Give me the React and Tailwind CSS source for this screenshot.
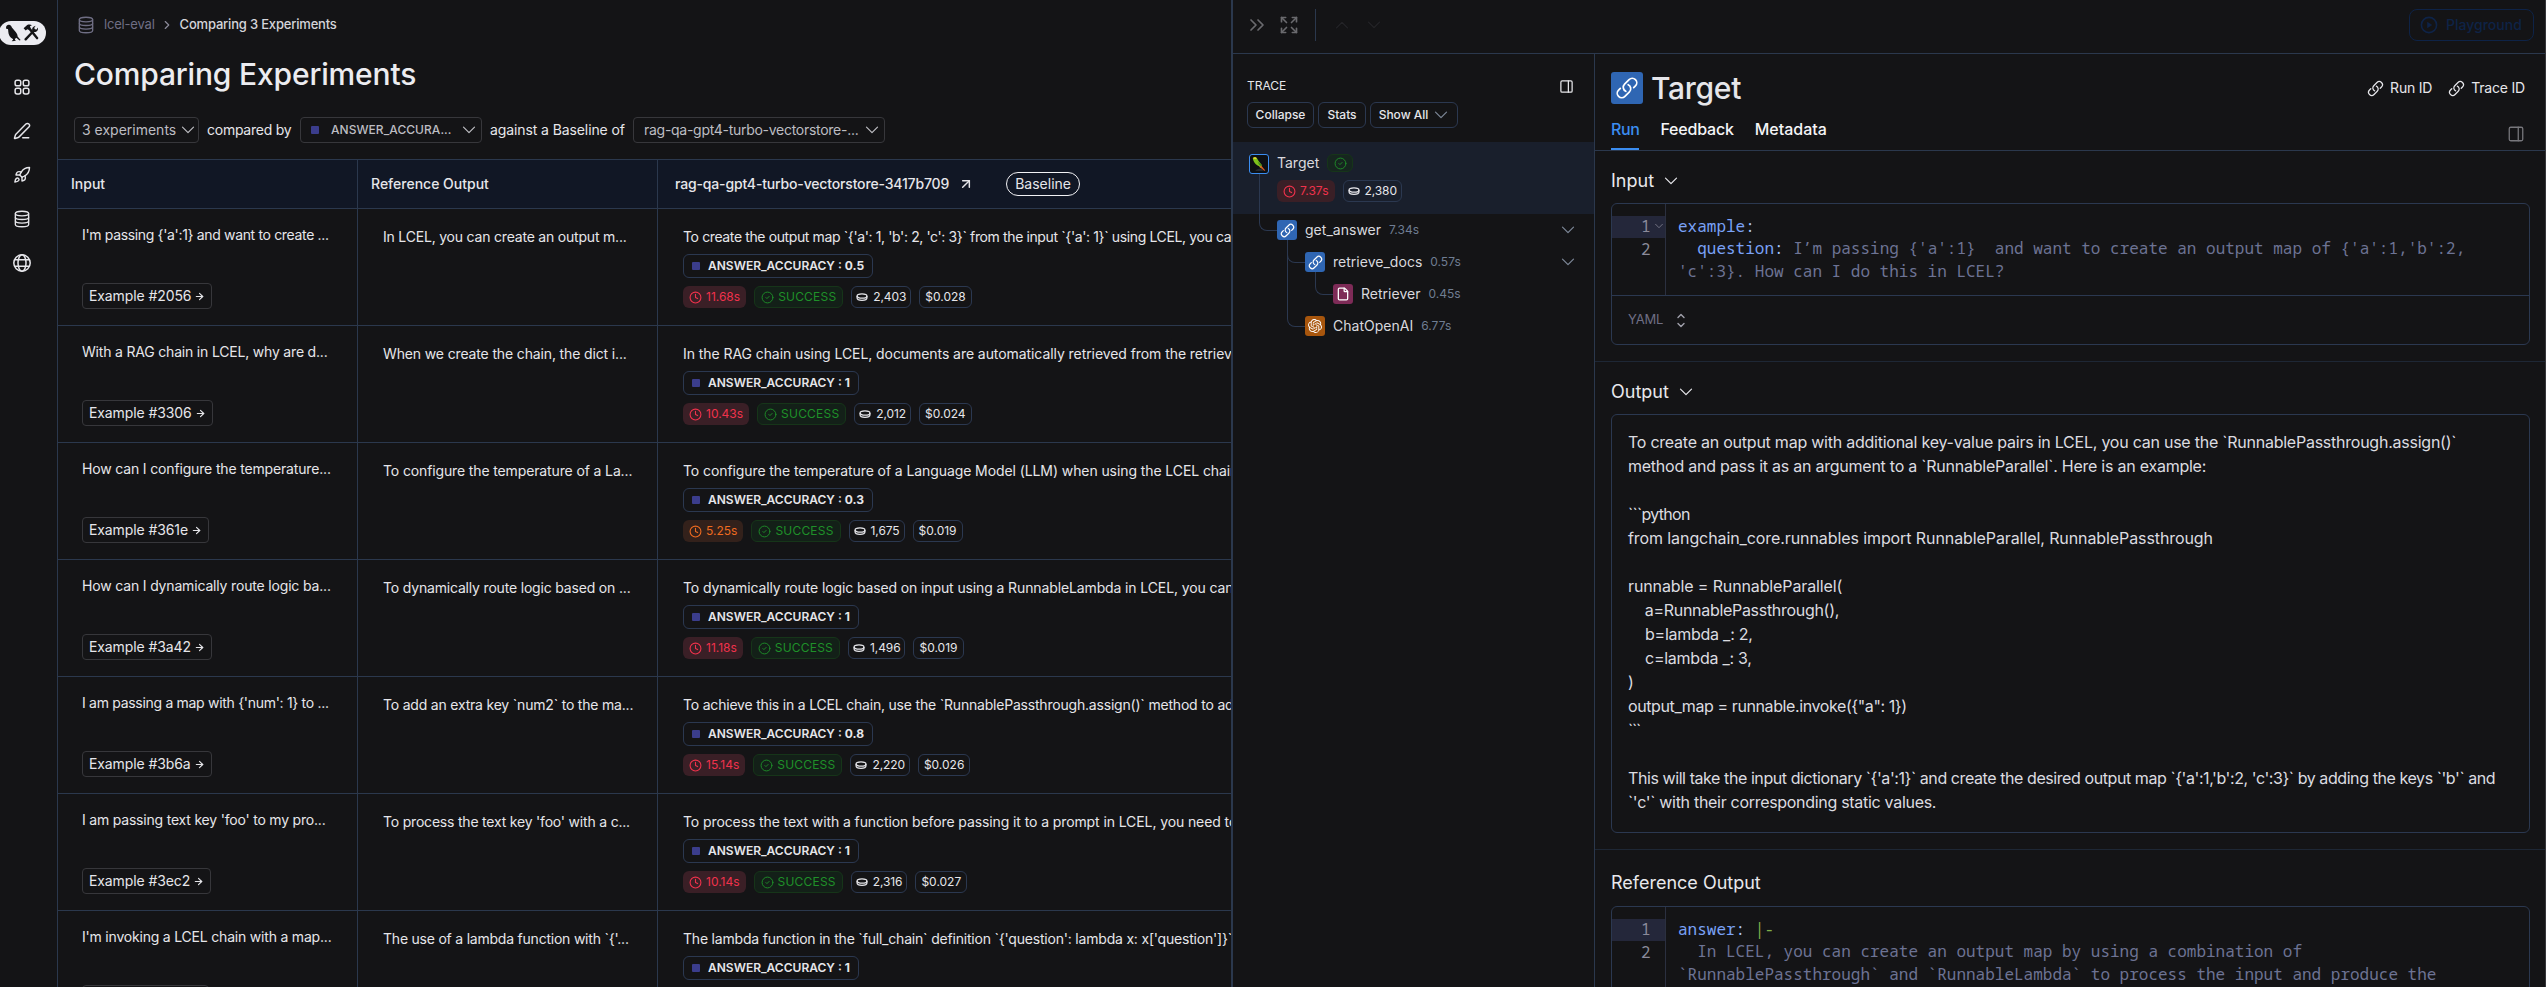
import React from "react";
import {
  ArrowRight, ArrowUpRight, ChevronRight, ChevronsRight,
  CircleCheck, Clock, Expand, File, PanelRight, PenLine, Rocket,
} from "lucide-react";
import { HiOutlineLink, HiOutlineSquares2X2 } from "react-icons/hi2";
import { SiOpenai } from "react-icons/si";

const rows = [
  { input: "I'm passing {'a':1} and want to create ...", it: "tracking-[-0.34px]", ref: "In LCEL, you can create an output m...", rt: "tracking-[-0.2px]", id: "2056", out: "To create the output map `{'a': 1, 'b': 2, 'c': 3}` from the input `{'a': 1}` using LCEL, you can use", ot: "tracking-[-0.38px]", score: "0.5", time: "11.68s", tokens: "2,403", cost: "$0.028" },
  { input: "With a RAG chain in LCEL, why are d...", it: "tracking-[-0.19px]", ref: "When we create the chain, the dict i...", rt: "tracking-[-0.14px]", id: "3306", out: "In the RAG chain using LCEL, documents are automatically retrieved from the retriever", ot: "tracking-[-0.07px]", score: "1", time: "10.43s", tokens: "2,012", cost: "$0.024" },
  { input: "How can I configure the temperature...", it: "tracking-[-0.16px]", ref: "To configure the temperature of a La...", rt: "tracking-[-0.13px]", id: "361e", out: "To configure the temperature of a Language Model (LLM) when using the LCEL chain", ot: "tracking-[-0.09px]", score: "0.3", time: "5.25s", slow: true, tokens: "1,675", cost: "$0.019" },
  { input: "How can I dynamically route logic ba...", it: "tracking-[-0.17px]", ref: "To dynamically route logic based on ...", rt: "tracking-[-0.18px]", id: "3a42", out: "To dynamically route logic based on input using a RunnableLambda in LCEL, you can", ot: "tracking-[-0.12px]", score: "1", time: "11.18s", tokens: "1,496", cost: "$0.019" },
  { input: "I am passing a map with {'num': 1} to ...", it: "tracking-[-0.3px]", ref: "To add an extra key `num2` to the ma...", rt: "tracking-[-0.2px]", id: "3b6a", out: "To achieve this in a LCEL chain, use the `RunnablePassthrough.assign()` method to add", ot: "tracking-[-0.2px]", score: "0.8", time: "15.14s", tokens: "2,220", cost: "$0.026" },
  { input: "I am passing text key 'foo' to my pro...", it: "tracking-[-0.2px]", ref: "To process the text key 'foo' with a c...", rt: "tracking-[-0.2px]", id: "3ec2", out: "To process the text with a function before passing it to a prompt in LCEL, you need to", ot: "tracking-[-0.1px]", score: "1", time: "10.14s", tokens: "2,316", cost: "$0.027" },
  { input: "I'm invoking a LCEL chain with a map...", it: "tracking-[-0.2px]", ref: "The use of a lambda function with `{'...", rt: "tracking-[-0.22px]", id: "4c1b", out: "The lambda function in the `full_chain` definition `{'question': lambda x: x['question']}`", ot: "tracking-[-0.2px]", score: "1", time: "9.87s", tokens: "2,105", cost: "$0.024" },
];

function Chevron({ className }) {
  return (
    <svg viewBox="0 0 16 16" fill="none" stroke="currentColor" strokeWidth="1.2" strokeLinecap="round" strokeLinejoin="round" className={"size-4 shrink-0 " + className}>
      <path d="M2.5 5.200 8 10.700l5.500-5.500" />
    </svg>
  );
}

function DatabaseIcon({ className }) {
  return (
    <svg viewBox="0 0 20 20" fill="none" stroke="currentColor" strokeWidth="1.5" className={className}>
      <ellipse cx="10" cy="4" rx="7.4" ry="2.6" />
      <path d="M2.6 4v12c0 1.4 3.300 2.6 7.400 2.6s7.400-1.200 7.400-2.6V4" />
      <path d="M2.6 8c0 1.4 3.300 2.6 7.400 2.6s7.400-1.200 7.400-2.6M2.6 12c0 1.4 3.300 2.6 7.400 2.6s7.400-1.200 7.400-2.6" />
    </svg>
  );
}

function GlobeIcon({ className }) {
  return (
    <svg viewBox="0 0 20 20" fill="none" stroke="currentColor" strokeWidth="1.5" className={className}>
      <circle cx="10" cy="10" r="8.2" />
      <ellipse cx="10" cy="10" rx="4" ry="8.2" />
      <path d="M2.6 6.8h14.8M2.6 13.2h14.8" />
    </svg>
  );
}

function TokenIcon({ className }) {
  return (
    <svg viewBox="0 0 12 12" fill="none" stroke="currentColor" strokeWidth="1.3" className={className}>
      <ellipse cx="6" cy="5" rx="4.9" ry="2.2" />
      <path d="M1.1 5v2c0 1.3 2.2 2.3 4.9 2.3s4.9-1 4.9-2.3V5" />
    </svg>
  );
}

function PlayIcon({ className }) {
  return (
    <svg viewBox="0 0 18 18" fill="none" stroke="currentColor" strokeWidth="1.6" className={className}>
      <circle cx="9" cy="9" r="7.6" />
      <path d="M7.2 5.8v6.4L12.2 9z" fill="currentColor" stroke="none" />
    </svg>
  );
}

function SelectorIcon({ className }) {
  return (
    <svg viewBox="0 0 10 16" fill="none" stroke="currentColor" strokeWidth="1.5" strokeLinecap="round" strokeLinejoin="round" className={className}>
      <path d="M1.8 4.8 5 1.6l3.2 3.2M1.8 11.2 5 14.4l3.2-3.2" />
    </svg>
  );
}

function Logo() {
  return (
    <div className="-ml-px h-6 w-[47px] rounded-full bg-[#ececf1]">
      <svg viewBox="0 0 46 24" className="h-6 w-[46px]" fill="#141416">
        <path d="M7 6.200c.3-1.700 1.500-2.700 3-2.500 1.600.2 2.500 1.300 2.900 2.800l4 4.700c1.300 1.700 1.700 3 1.700 4.400l3 3.500-1 .3-3.300-2.600c-.5.6-.9.8-1.500 1l.3 1.200 1 .4-1.800.6-2.500.2.300-.8 1-.4-.2-1c-2.800-1.300-4.600-4.400-4.600-7.200 0-1.200-.1-1.900-.4-2.700l-1.500-.2z" />
        <path d="M24.600 7.200l3.600-3.200c1.900-.7 3.600-.4 4.700.2l-2 1 .9 2 7.500 9.600c.3 1-.9 2-1.800 1.500l-7.600-9.200-1.600-.8-1.600 1.300z" />
        <path d="M25.500 17.700l7.700-7.900c-.6-2.400.8-4.700 3.400-5.100l-1.400 2.200.8 1.400 1.600.1 1.200-2c.8 2.400-1 4.800-3.700 4.600l-7.600 8.300c-1.300.7-2.400-.4-2-1.600z" />
      </svg>
    </div>
  );
}

function Parrot() {
  return (
    <span className="flex size-5 items-center justify-center rounded-[3px] border border-[#3b8df0] bg-[#0d1014]">
      <svg viewBox="0 0 18 18" className="size-[18px]">
        <path d="M5.500 15.500c2-2 5.500-2.300 8-.8l-1 1.300H5.500z" fill="#252b31" />
        <path d="M2.800 3.600C3 2 5.900 1.500 7.100 3.400l1.500 2.600 3.200 4-.6 2.200-3.600-1.800C4.900 8.900 3.700 6.500 3.200 5z" fill="#7ec21b" />
        <path d="M2.900 3.300C3.600 1.800 6.300 1.800 6.900 3.500l-1.700.8z" fill="#e8d52f" />
        <path d="M7.500 6.500 11.600 10l.6 2.200-3-2.500z" fill="#3d8a1c" />
        <path d="M10.900 10.300l4.400 5.200-1.200.3-3.800-3.800z" fill="#e25822" />
        <path d="M9.700 10.700l2.800 3.400-3-2.200z" fill="#e9a723" />
      </svg>
    </span>
  );
}

function Select({ className, children }) {
  return (
    <div className={"flex h-[26px] items-center rounded-[4px] border border-[#37373b] text-[#bdbdc2] " + className}>
      {children}
      <Chevron className="ml-auto" />
    </div>
  );
}

function TimeBadge({ slow, children }) {
  const tone = slow ? "bg-[#33211b] text-[#ee6b20]" : "bg-[#3a1f26] text-[#f0324c]";
  return (
    <span className={"flex h-[22px] items-center gap-1 rounded-md px-[6px] text-xs " + tone}>
      <Clock className="size-[13px]" strokeWidth={2} />
      {children}
    </span>
  );
}

function TokenBadge({ children }) {
  return (
    <span className="flex h-[22px] items-center gap-[5px] rounded-md border border-[#2b3850] px-1 text-xs tracking-[-0.1px] text-[#e6e6ea]">
      <TokenIcon className="size-3" />
      {children}
    </span>
  );
}

function Row({ row }) {
  return (
    <div className="flex h-[117px] shrink-0 border-b border-[#2b384d] text-sm text-[#e6e6ea]">
      <div className="flex w-[300px] shrink-0 flex-col border-r border-[#2b384d] pl-6 pt-4">
        <div className={"h-5 leading-5 whitespace-nowrap " + row.it}>{row.input}</div>
        <div className="mt-[38px] flex h-[26px] items-center gap-[3px] self-start rounded-[4px] border border-[#37373b] px-[6px] whitespace-nowrap tracking-[-0.1px]">
          Example #{row.id}
          <ArrowRight className="size-[11px]" strokeWidth={2.5} />
        </div>
      </div>
      <div className="w-[300px] shrink-0 border-r border-[#2b384d] pl-[25px] pt-[18px]">
        <div className={"h-5 leading-5 whitespace-nowrap " + row.rt}>{row.ref}</div>
      </div>
      <div className="flex min-w-0 flex-1 flex-col overflow-hidden pl-[25px] pt-[18px]">
        <div className={"h-5 leading-5 whitespace-nowrap " + row.ot}>{row.out}</div>
        <div className="mt-[7px] flex h-6 items-center self-start rounded-md border border-[#2b3850] px-2 text-xs font-semibold whitespace-pre">
          <span className="mr-2 size-2 rounded-[1px] bg-[#3b3d8c]" />
          ANSWER_ACCURACY : <span className="font-bold">{row.score}</span>
        </div>
        <div className="mt-2 flex gap-2">
          <TimeBadge slow={row.slow}>{row.time}</TimeBadge>
          <span className="flex h-[22px] items-center gap-1 rounded-md border border-[#163519] bg-[#132018] px-[6px] text-xs tracking-[0.2px] text-[#1f9029]">
            <CircleCheck className="size-[13px]" strokeWidth={1.7} />
            SUCCESS
          </span>
          <TokenBadge>{row.tokens}</TokenBadge>
          <span className="flex h-[22px] items-center rounded-md border border-[#2b3850] px-[5px] text-xs">{row.cost}</span>
        </div>
      </div>
    </div>
  );
}

function TreeButton({ children, className }) {
  return (
    <div className={"flex h-[26px] items-center justify-center rounded-md border border-[#2b3850] text-xs font-medium text-[#e6e6ea] " + className}>
      {children}
    </div>
  );
}

function TreeRow({ pad, line, icon, name, time, open }) {
  return (
    <div className={"relative flex h-8 items-center pr-[18px] " + pad}>
      <span className={"absolute w-[19px] rounded-bl-lg border-b border-l border-[#2b3850] " + line} />
      <span className="relative">{icon}</span>
      <span className="ml-2 text-sm tracking-[0.02px] text-[#d9d9de]">{name}</span>
      <span className="ml-2 text-xs text-[#6f7d92]">{time}</span>
      {open && <Chevron className="ml-auto text-[#7d8798]" />}
    </div>
  );
}

const LinkTile = () => (
  <span className="flex size-5 items-center justify-center rounded-[3px] bg-[#2f66b3] text-white">
    <HiOutlineLink className="size-[15px]" strokeWidth={1.9} />
  </span>
);

function SectionTitle({ children, chevron }) {
  return (
    <div className="flex h-7 items-center gap-[9px] text-lg text-[#e8e8ec]">
      {children}
      {chevron && <Chevron className="" />}
    </div>
  );
}

function GutterLine({ active, children }) {
  return (
    <div className={"flex h-[22.4px] items-center pb-[2px] pl-[29px] " + (active ? "bg-[#24273a]" : "")}>{children}</div>
  );
}

const output = [
  ["To create an output map with additional key-value pairs in LCEL, you can use the `RunnablePassthrough.assign()`", "tracking-[-0.24px]"],
  ["method and pass it as an argument to a `RunnableParallel`. Here is an example:", "tracking-[-0.24px]"],
  ["", ""],
  ["```python", "tracking-[-0.7px]"],
  ["from langchain_core.runnables import RunnableParallel, RunnablePassthrough", "tracking-[-0.09px]"],
  ["", ""],
  ["runnable = RunnableParallel(", "tracking-[-0.12px]"],
  ["    a=RunnablePassthrough(),", "tracking-[-0.3px]"],
  ["    b=lambda _: 2,", "tracking-[-0.25px]"],
  ["    c=lambda _: 3,", "tracking-[-0.25px]"],
  [")", ""],
  ["output_map = runnable.invoke({\"a\": 1})", "tracking-[-0.4px]"],
  ["```", "tracking-[-1.2px]"],
  ["", ""],
  ["This will take the input dictionary `{'a':1}` and create the desired output map `{'a':1,'b':2, 'c':3}` by adding the keys `'b'` and", "tracking-[-0.42px]"],
  ["`'c'` with their corresponding static values.", "tracking-[-0.3px]"],
];

export default function App() {
  return (
    <div className="flex h-[987px] w-full overflow-hidden bg-[#141416] font-['Inter','Liberation_Sans',sans-serif] text-[#e6e6ea]">
      <nav className="flex w-[58px] shrink-0 flex-col border-r border-[#2b384d] pt-[21px] text-[#e6e6ea]">
        <Logo />
        <div className="mt-[32px] flex w-11 flex-col items-center gap-6">
          <HiOutlineSquares2X2 className="size-5" strokeWidth={1.8} />
          <PenLine className="size-5 p-[1px]" strokeWidth={1.9} />
          <Rocket className="size-5 p-[1px]" strokeWidth={1.9} />
          <DatabaseIcon className="size-5 p-[1px]" />
          <GlobeIcon className="size-5" />
        </div>
      </nav>

      <main className="flex w-[1173px] shrink-0 flex-col overflow-hidden">
        <div className="flex h-[159px] shrink-0 flex-col pl-4">
          <div className="mt-[15px] flex h-5 items-center text-[13px] tracking-[-0.19px]">
            <DatabaseIcon className="ml-[3px] size-[18px] text-[#6f6e84]" />
            <span className="ml-[9px] text-[#6f6e84]">lcel-eval</span>
            <ChevronRight className="ml-[5px] size-3.5 text-[#8b8a99]" />
            <span className="ml-[6px] font-medium text-[#d5d5da]">Comparing 3 Experiments</span>
          </div>
          <h1 className="mt-[21px] text-3xl leading-9 font-medium tracking-[-0.17px] text-[#ececf0]">Comparing Experiments</h1>
          <div className="mt-[25px] flex items-center text-sm">
            <Select className="w-[125px] pr-[2px] pl-[7px]">3 experiments</Select>
            <span className="ml-2 w-[93px] tracking-[-0.25px]">compared by</span>
            <Select className="w-[182px] pr-1 pl-[10px]">
              <span className="mr-3 size-2 rounded-[1px] bg-[#3b3d8c]" />
              <span className="text-xs font-medium tracking-[0.05px]">ANSWER_ACCURA...</span>
            </Select>
            <span className="ml-2 w-[143px] tracking-[-0.1px]">against a Baseline of</span>
            <Select className="w-[252px] pr-1 pl-[10px] tracking-[-0.28px]">rag-qa-gpt4-turbo-vectorstore-...</Select>
          </div>
        </div>
        <div className="flex h-[50px] shrink-0 items-stretch border-y border-[#2b384d] bg-[#111725] text-sm font-medium">
          <div className="flex w-[300px] shrink-0 items-center border-r border-[#2b384d] pl-[13px]">Input</div>
          <div className="flex w-[300px] shrink-0 items-center border-r border-[#2b384d] pl-[13px]">Reference Output</div>
          <div className="flex items-center pl-[17px]">
            <span className="tracking-[-0.16px]">rag-qa-gpt4-turbo-vectorstore-3417b709</span>
            <ArrowUpRight className="ml-[9px] size-4" strokeWidth={2.2} />
            <span className="ml-[32px] flex h-6 w-[74px] items-center justify-center rounded-full border border-[#f2f2f5] font-normal">Baseline</span>
          </div>
        </div>
        {rows.map((row) => <Row key={row.id} row={row} />)}
      </main>

      <aside className="flex min-w-0 flex-1 flex-col border-r border-l-2 border-r-[#37373b] border-l-[#2b384d]">
        <header className="flex h-[54px] shrink-0 items-center border-b border-[#2b384d] pb-[3px]">
          <ChevronsRight className="ml-[12px] size-6 text-[#6a6a6e]" strokeWidth={1.7} />
          <Expand className="ml-[10px] size-5 text-[#6a6a6e]" strokeWidth={2} />
          <span className="ml-[16px] h-8 w-px bg-[#2b384d]" />
          <Chevron className="ml-[18px] rotate-180 text-[#242428]" />
          <Chevron className="ml-[16px] text-[#242428]" />
          <div className="mr-[11px] ml-auto flex h-8 w-[125px] items-center rounded-lg border border-[#0e2347] pl-[10px] text-sm font-medium text-[#0e2347]">
            <PlayIcon className="size-[18px]" />
            <span className="ml-2">Playground</span>
          </div>
        </header>

        <div className="flex min-h-0 flex-1">
          <div className="flex w-[362px] shrink-0 flex-col border-r border-[#2b384d]">
            <div className="mt-[22px] flex h-5 items-center justify-between pr-[20px] pl-[14px] text-xs">
              TRACE
              <PanelRight className="size-[15px]" strokeWidth={2} />
            </div>
            <div className="mt-[6px] flex gap-1 pl-[14px]">
              <TreeButton className="w-[67px]">Collapse</TreeButton>
              <TreeButton className="w-[48px]">Stats</TreeButton>
              <TreeButton className="w-[88px] gap-[5px]">
                Show All
                <Chevron className="text-[#7d8798]" />
              </TreeButton>
            </div>
            <div className="mt-[14px] flex h-[72px] bg-[#191f2c] pt-3 pl-4">
              <Parrot />
              <div className="ml-2">
                <div className="-mt-px flex h-5 items-center text-sm text-[#d9d9de]">
                  Target
                  <span className="ml-2 flex h-[18px] w-[26px] items-center justify-center rounded-md border border-[#163519] bg-[#16261f] text-[#1f9029]">
                    <CircleCheck className="size-[13px]" strokeWidth={1.7} />
                  </span>
                </div>
                <div className="mt-[7px] flex gap-2">
                  <TimeBadge>7.37s</TimeBadge>
                  <TokenBadge>2,380</TokenBadge>
                </div>
              </div>
            </div>
            <TreeRow pad="pl-[44px]" line="left-[26px] bottom-[15px] h-[57px]" icon={<LinkTile />} name="get_answer" time="7.34s" open />
            <TreeRow pad="pl-[72px]" line="left-[54px] bottom-[15px] h-[23px]" icon={<LinkTile />} name="retrieve_docs" time="0.57s" open />
            <TreeRow
              pad="pl-[100px]"
              line="left-[82px] bottom-[15px] h-[23px]"
              icon={<span className="flex size-5 items-center justify-center rounded-[3px] bg-[#7e2b57] text-white"><File className="size-[14px]" strokeWidth={2.2} /></span>}
              name="Retriever"
              time="0.45s"
            />
            <TreeRow
              pad="pl-[72px]"
              line="left-[54px] bottom-[15px] h-[87px]"
              icon={<span className="flex size-5 items-center justify-center rounded-[3px] bg-[#a8560d] text-white"><SiOpenai className="size-[14px]" /></span>}
              name="ChatOpenAI"
              time="6.77s"
            />
          </div>

          <div className="flex min-w-0 flex-1 flex-col">
            <div className="h-[97px] shrink-0 border-b border-[#2b384d] pr-[20px] pl-4">
              <div className="mt-[18px] flex h-8 items-center">
                <span className="flex size-8 items-center justify-center rounded-[3px] bg-[#2f66b3] text-white">
                  <HiOutlineLink className="size-6" strokeWidth={1.7} />
                </span>
                <span className="ml-2 text-3xl font-medium tracking-[-0.3px]">Target</span>
                <div className="ml-auto flex items-center text-sm tracking-[-0.2px]">
                  <HiOutlineLink className="size-[17px]" strokeWidth={1.8} />
                  <span className="pl-[6px]">Run ID</span>
                  <HiOutlineLink className="ml-4 size-[17px]" strokeWidth={1.8} />
                  <span className="pl-[6px]">Trace ID</span>
                </div>
              </div>
              <div className="flex h-[46px] items-stretch gap-[21px] text-base font-medium text-[#f5f5f7]">
                <div className="flex border-b-2 border-[#3b8df0] pt-[13px] leading-6 tracking-[-0.4px] text-[#3b8df0]">Run</div>
                <div className="pt-[13px] leading-6 tracking-[-0.2px]">Feedback</div>
                <div className="pt-[13px] leading-6">Metadata</div>
                <PanelRight className="mt-[21px] ml-auto size-[18px] text-[#77777c]" strokeWidth={1.7} />
              </div>
            </div>

            <section className="h-[211px] shrink-0 border-b border-[#1e2735] pt-4 pr-[15px] pl-4">
              <SectionTitle chevron>Input</SectionTitle>
              <div className="mt-[8px] flex h-[142px] flex-col rounded-md border border-[#2b3850] font-['Noto_Sans_Mono','Liberation_Mono',monospace] text-base">
                <div className="flex h-[91px]">
                  <div className="w-[54px] border-r border-[#2b3040] pt-[12px] text-[#8b8b9a]">
                    <GutterLine active>1<Chevron className="ml-[3px] !size-[10px]" /></GutterLine>
                    <GutterLine>2</GutterLine>
                  </div>
                  <div className="pt-[11px] pl-[12px] leading-[22.4px] whitespace-pre text-[#6d7394]">
                    <div><span className="text-[#7aa2f7]">example</span><span className="text-[#a9c7ff]">:</span></div>
                    <div>{"  "}<span className="text-[#7aa2f7]">question</span><span className="text-[#a9c7ff]">:</span>{" I’m passing {'a':1}  and want to create an output map of {'a':1,'b':2,"}</div>
                    <div>{"'c':3}. How can I do this in LCEL?"}</div>
                  </div>
                </div>
                <div className="flex flex-1 items-center gap-[13px] border-t border-[#2b3850] pl-4 font-['Inter',sans-serif] text-[13px] tracking-[-0.2px] text-[#6f6e84]">
                  YAML
                  <SelectorIcon className="h-[15px] w-[10px] text-[#a0a0ab]" />
                </div>
              </div>
            </section>

            <section className="h-[488px] shrink-0 border-b border-[#1e2735] pt-4 pr-[15px] pl-4">
              <SectionTitle chevron>Output</SectionTitle>
              <div className="mt-[8px] h-[419px] rounded-md border border-[#2b3850] pt-[15px] pl-4 text-base leading-6 text-[#dcdce0]">
                {output.map(([text, track], i) => (
                  <div key={i} className={"h-6 whitespace-pre " + track}>{text}</div>
                ))}
              </div>
            </section>

            <section className="min-h-0 flex-1 overflow-hidden pt-[19px] pr-[15px] pl-4">
              <SectionTitle>Reference Output</SectionTitle>
              <div className="mt-[9px] flex h-[200px] rounded-md border border-[#2b3850] font-['Noto_Sans_Mono','Liberation_Mono',monospace] text-base">
                <div className="w-[54px] border-r border-[#2b3040] pt-[12px] text-[#8b8b9a]">
                  <GutterLine active>1</GutterLine>
                  <GutterLine>2</GutterLine>
                </div>
                <div className="pt-[11px] pl-[12px] leading-[22.4px] whitespace-pre text-[#6d7394]">
                  <div><span className="text-[#7aa2f7]">answer</span><span className="text-[#a9c7ff]">:</span> <span className="text-[#7fae4a]">|-</span></div>
                  <div>{"  In LCEL, you can create an output map by using a combination of"}</div>
                  <div>{"`RunnablePassthrough` and `RunnableLambda` to process the input and produce the"}</div>
                </div>
              </div>
            </section>
          </div>
        </div>
      </aside>
    </div>
  );
}
